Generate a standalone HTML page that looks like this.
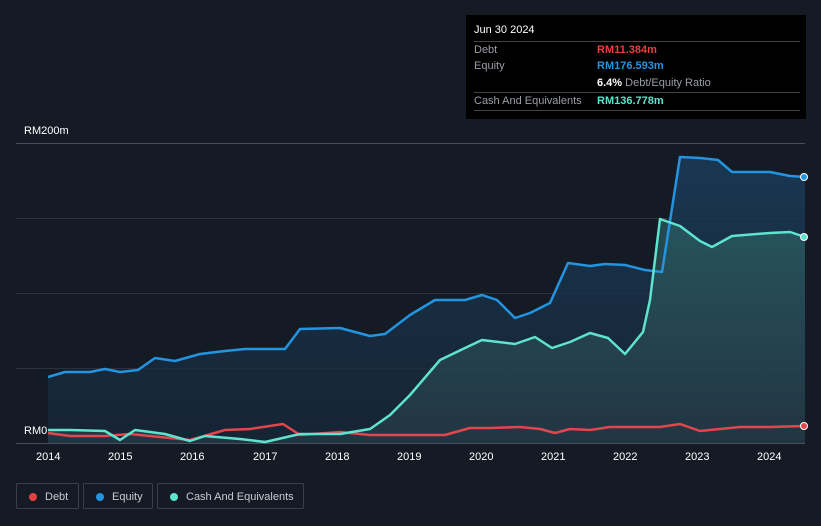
<!DOCTYPE html>
<html><head><meta charset="utf-8"><style>
body{margin:0;width:821px;height:526px;background:#151b25;font-family:"Liberation Sans",sans-serif;overflow:hidden;position:relative}
.t{position:absolute;color:#fff;font-size:11px}
.tip{position:absolute;left:466px;top:15px;width:340px;height:104px;background:#000;}
.row{position:absolute;left:8px;width:326px;font-size:11px;color:#9a9ea6;border-top:1px solid #444;height:17px;line-height:17px}
.v{position:absolute;left:123px;font-weight:bold}
.leg{position:absolute;top:483px;height:26px;border:1px solid #3a404b;border-radius:2px;color:#c8ccd2;font-size:11px;line-height:26px;box-sizing:border-box}
.leg i{position:absolute;left:12px;top:9px;width:8px;height:8px;border-radius:50%}
</style></head><body>
<svg width="821" height="526" style="position:absolute;left:0;top:0">
<defs>
<linearGradient id="g1" x1="0" y1="0" x2="0" y2="1"><stop offset="0" stop-color="#1a3a57" stop-opacity=".9"/><stop offset="1" stop-color="#17283a" stop-opacity=".7"/></linearGradient>
<linearGradient id="g2" x1="0" y1="0" x2="0" y2="1"><stop offset="0" stop-color="#2f6a6a" stop-opacity=".6"/><stop offset="1" stop-color="#2a3f4c" stop-opacity=".6"/></linearGradient>
</defs>
<g stroke="#2c323c" stroke-width="1">
<line x1="16" y1="143.5" x2="805" y2="143.5" stroke="#4a4f58"/>
<line x1="16" y1="218.5" x2="805" y2="218.5"/>
<line x1="16" y1="293.5" x2="805" y2="293.5"/>
<line x1="16" y1="368.5" x2="805" y2="368.5"/>
<line x1="16" y1="443.5" x2="805" y2="443.5" stroke="#4a4f58"/>
</g>
<polygon fill="url(#g1)" points="48,377 65,372 90,372 105,369 120,372 138,370 155,358 175,361 200,354 225,351 245,349 285,349 300,329 340,328 370,336 385,334 410,315 435,300 465,300 482,295 497,300 515,318 530,313 550,303 568,263 590,266 605,264 625,265 645,270 662,272 680,157 700,158 718,160 732,172 770,172 790,176 805,177 805,443 48,443"/>
<polygon fill="url(#g2)" points="48,430 70,430 105,431 120,440 135,430 165,434 190,441 205,436 240,439 265,442 300,434 340,434 370,429 390,415 410,395 440,360 465,348 482,340 515,344 535,337 552,348 570,342 590,333 608,338 625,354 643,332 650,300 660,219 680,226 700,241 712,247 732,236 770,233 790,232 805,237 805,443 48,443"/>
<polyline fill="none" stroke="#2394e0" stroke-width="2.5" stroke-linejoin="round" points="48,377 65,372 90,372 105,369 120,372 138,370 155,358 175,361 200,354 225,351 245,349 285,349 300,329 340,328 370,336 385,334 410,315 435,300 465,300 482,295 497,300 515,318 530,313 550,303 568,263 590,266 605,264 625,265 645,270 662,272 680,157 700,158 718,160 732,172 770,172 790,176 805,177"/>
<polyline fill="none" stroke="#e0474c" stroke-width="2.5" stroke-linejoin="round" points="48,433 70,436 105,436 130,434 190,440 225,430 250,429 283,424 300,435 340,432 370,435 445,435 470,428 490,428 520,427 540,429 555,433 570,429 590,430 610,427 660,427 680,424 700,431 740,427 770,427 805,426"/>
<polyline fill="none" stroke="#5ee3cf" stroke-width="2.5" stroke-linejoin="round" points="48,430 70,430 105,431 120,440 135,430 165,434 190,441 205,436 240,439 265,442 300,434 340,434 370,429 390,415 410,395 440,360 465,348 482,340 515,344 535,337 552,348 570,342 590,333 608,338 625,354 643,332 650,300 660,219 680,226 700,241 712,247 732,236 770,233 790,232 805,237"/>
<circle cx="804" cy="177" r="3.5" fill="#2394e0" stroke="#fff" stroke-width="1"/>
<circle cx="804" cy="237" r="3.5" fill="#5ee3cf" stroke="#fff" stroke-width="1"/>
<circle cx="804" cy="426" r="3.5" fill="#e0474c" stroke="#fff" stroke-width="1"/>
</svg>
<div class="t" style="left:24px;top:125px">RM200m</div>
<div class="t" style="left:24px;top:425px">RM0</div>
<div class="t" style="left:36px;top:451px">2014</div>
<div class="t" style="left:108px;top:451px">2015</div>
<div class="t" style="left:180px;top:451px">2016</div>
<div class="t" style="left:253px;top:451px">2017</div>
<div class="t" style="left:325px;top:451px">2018</div>
<div class="t" style="left:397px;top:451px">2019</div>
<div class="t" style="left:469px;top:451px">2020</div>
<div class="t" style="left:541px;top:451px">2021</div>
<div class="t" style="left:613px;top:451px">2022</div>
<div class="t" style="left:685px;top:451px">2023</div>
<div class="t" style="left:757px;top:451px">2024</div>
<div class="tip">
<div style="position:absolute;left:8px;top:9px;color:#fff;font-size:11px">Jun 30 2024</div>
<div class="row" style="top:26px">Debt<span class="v" style="color:#e8403f">RM11.384m</span></div>
<div class="row" style="top:43px;border-top:none;border-bottom:0">Equity<span class="v" style="color:#2394e0">RM176.593m</span></div>
<div class="row" style="top:60px;border-top:none"><span class="v" style="color:#fff">6.4% <span style="color:#9a9ea6;font-weight:normal">Debt/Equity Ratio</span></span></div>
<div class="row" style="top:77px;border-bottom:1px solid #444">Cash And Equivalents<span class="v" style="color:#5ee3cf">RM136.778m</span></div>
</div>
<div class="leg" style="left:16px;width:63px"><i style="background:#e8403f"></i><span style="position:absolute;left:28px">Debt</span></div>
<div class="leg" style="left:83px;width:70px"><i style="background:#2394e0"></i><span style="position:absolute;left:28px">Equity</span></div>
<div class="leg" style="left:157px;width:147px"><i style="background:#5ee3cf"></i><span style="position:absolute;left:28px">Cash And Equivalents</span></div>
</body></html>
